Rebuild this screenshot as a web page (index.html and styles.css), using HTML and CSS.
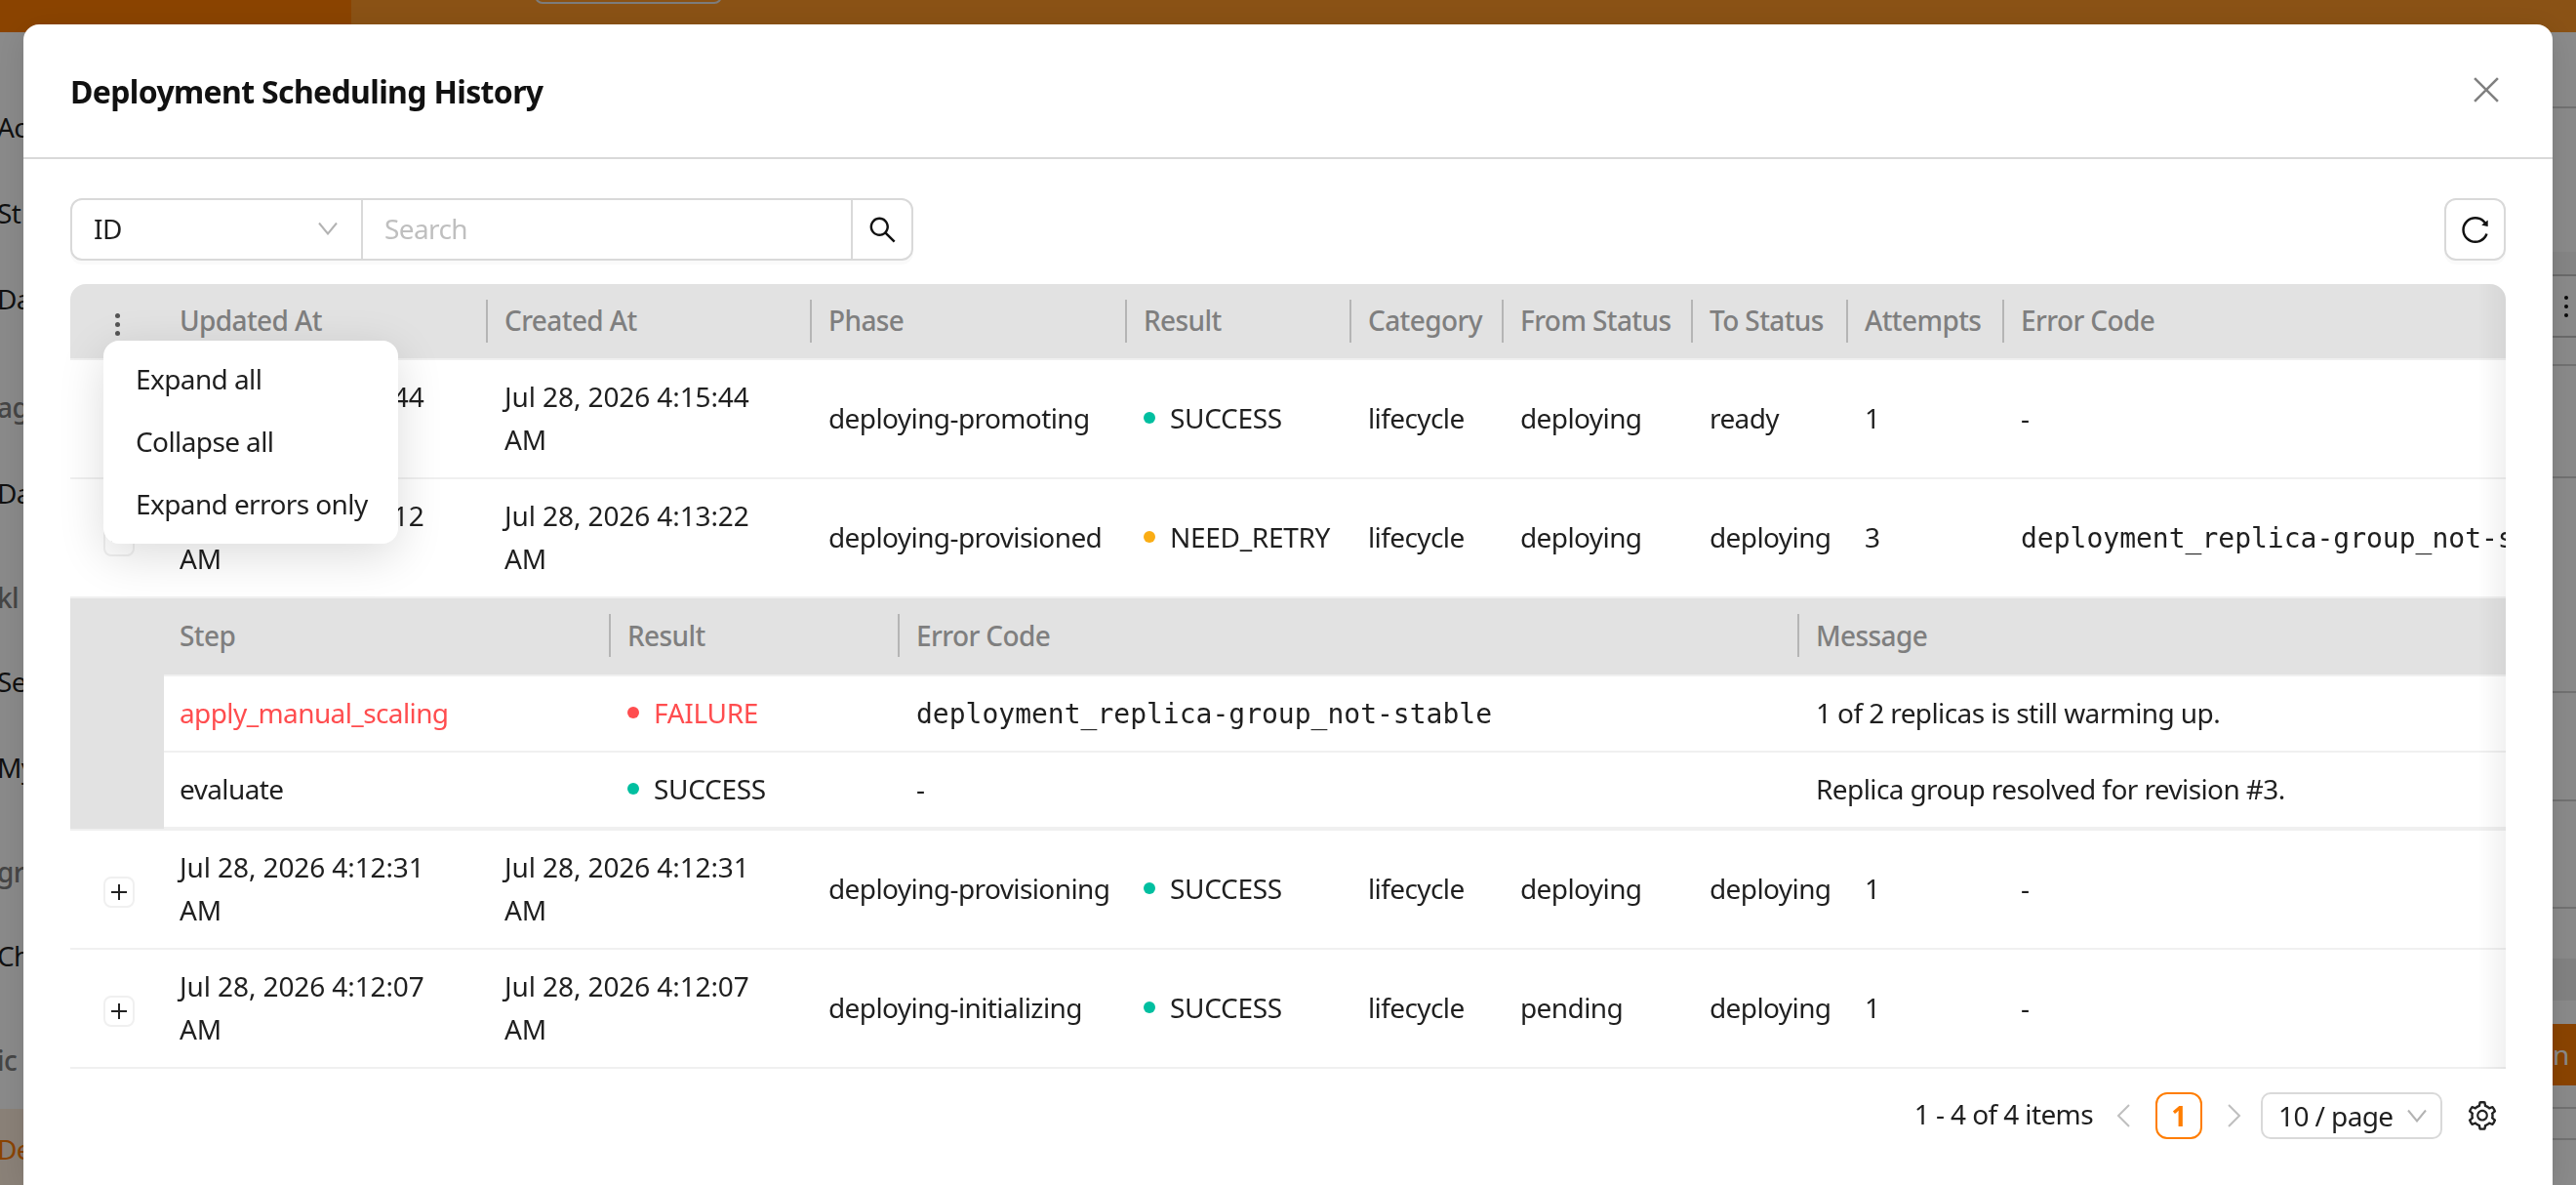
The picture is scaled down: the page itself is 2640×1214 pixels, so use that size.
FILE: index.html
```html
<!DOCTYPE html>
<html lang="en">
<head>
    <meta charset="UTF-8">
    <title>Deployment Scheduling History</title>
    <link rel="stylesheet" href="styles.css">
</head>
<body>
    <div class="app">
        <div class="topbar">
            <div class="brand"></div>
            <div class="topbar-main"><div class="top-btn"></div></div>
        </div>
        <div class="page">
            <div class="sidebar">
                <div class="side-item">Ac</div>
                <div class="side-item">St</div>
                <div class="side-item">Da</div>
                <div class="side-label">ag</div>
                <div class="side-item">Da</div>
                <div class="side-label tight">kl</div>
                <div class="side-item">Se</div>
                <div class="side-item">My</div>
                <div class="side-label tight">gr</div>
                <div class="side-item">Ch</div>
                <div class="side-label tight">ic</div>
                <div class="side-item active">De</div>
            </div>
            <div class="rail">
                <div class="rail-row"></div>
                <div class="rail-row plain"></div>
                <div class="rail-row soft"></div>
                <div class="rail-row dots"><span></span><span></span><span></span></div>
                <div class="rail-row"></div>
                <div class="rail-row"></div>
                <div class="rail-row"></div>
                <div class="rail-row"></div>
                <div class="rail-row"></div>
                <div class="rail-row plain"></div>
                <div class="rail-row dark"></div>
                <div class="rail-row plain"></div>
                <div class="rail-row orange">n</div>
                <div class="rail-row"></div>
                <div class="rail-row"></div>
                <div class="rail-row plain"></div>
            </div>
        </div>
    </div>
    <div class="mask"></div>

    <div class="modal">
        <div class="modal-header">
            <h1>Deployment Scheduling History</h1>
            <svg class="close-icon" viewBox="0 0 24 24"><path d="M1 1l22 22M23 1L1 23"/></svg>
        </div>
        <div class="modal-body">
            <div class="toolbar">
                <div class="search-group">
                    <div class="field-select">
                        <span>ID</span>
                        <svg class="chevron" viewBox="0 0 20 14"><path d="M1 1.5l9 11 9-11"/></svg>
                    </div>
                    <div class="search-input">Search</div>
                    <div class="search-btn">
                        <svg class="icon" viewBox="0 0 1024 1024"><path d="M909.6 854.5L649.9 594.8C690.2 542.7 712 479 712 412c0-80.2-31.3-155.4-87.9-212.1-56.6-56.7-132-87.9-212.1-87.9s-155.5 31.3-212.1 87.9C143.2 256.5 112 331.8 112 412c0 80.1 31.3 155.5 87.9 212.1C256.5 680.8 331.8 712 412 712c67 0 130.6-21.8 182.7-62l259.7 259.6a8.2 8.2 0 0011.6 0l43.6-43.5a8.2 8.2 0 000-11.6zM570.4 570.4C528 612.7 471.8 636 412 636s-116-23.3-158.4-65.6C211.3 528 188 471.8 188 412s23.3-116.1 65.6-158.4C296 211.3 352.2 188 412 188s116.1 23.2 158.4 65.6S636 352.2 636 412s-23.3 116.1-65.6 158.4z"/></svg>
                    </div>
                </div>
                <div class="refresh-btn">
                    <svg class="icon" viewBox="0 0 1024 1024"><path d="M909.1 209.3l-56.4 44.1C775.8 155.1 656.2 92 521.9 92 290 92 102.3 279.5 102 511.5 101.7 743.7 289.8 932 521.9 932c181.3 0 335.8-115 394.6-276.1 1.5-4.2-.7-8.9-4.9-10.3l-56.7-19.5a8 8 0 00-10.1 4.8c-1.8 5-3.8 10-5.9 14.9-17.3 41-42.1 77.8-73.7 109.4A344.77 344.77 0 01655.9 829c-42.3 17.9-87.4 27-133.8 27-46.5 0-91.5-9.1-133.8-27A341.5 341.5 0 01279 755.2a342.16 342.16 0 01-73.7-109.4c-17.9-42.4-27-87.4-27-133.9s9.1-91.5 27-133.9c17.3-41 42.1-77.8 73.7-109.4 31.6-31.6 68.4-56.4 109.3-73.8 42.3-17.9 87.4-27 133.8-27 46.5 0 91.5 9.1 133.8 27a341.5 341.5 0 01109.3 73.8c9.9 9.9 19.2 20.4 27.8 31.4l-60.2 47a8 8 0 003 14.1l175.6 43c5 1.2 9.9-2.6 9.9-7.7l.8-180.9c-.1-6.6-7.8-10.3-13-6.2z"/></svg>
                </div>
            </div>

            <div class="table-area">
                <div class="table-wrap">
                    <table class="history">
                        <colgroup>
                            <col class="c-expand"><col class="c-updated"><col class="c-created"><col class="c-phase"><col class="c-result">
                            <col class="c-category"><col class="c-from"><col class="c-to"><col class="c-attempts"><col class="c-error">
                        </colgroup>
                        <thead>
                            <tr>
                                <th class="expand-cell"><span class="kebab"><i></i><i></i><i></i></span></th>
                                <th>Updated At</th>
                                <th>Created At</th>
                                <th>Phase</th>
                                <th>Result</th>
                                <th>Category</th>
                                <th>From Status</th>
                                <th>To Status</th>
                                <th>Attempts</th>
                                <th class="last">Error Code</th>
                            </tr>
                        </thead>
                        <tbody>
                            <tr>
                                <td class="expand-cell"><span class="expand-btn"><svg viewBox="0 0 16 16"><path d="M0 8h16M8 0v16"/></svg></span></td>
                                <td class="date">Jul 28, 2026 4:15:44<br>AM</td>
                                <td class="date">Jul 28, 2026 4:15:44<br>AM</td>
                                <td>deploying-promoting</td>
                                <td><span class="status"><i class="dot ok"></i>SUCCESS</span></td>
                                <td>lifecycle</td>
                                <td>deploying</td>
                                <td>ready</td>
                                <td>1</td>
                                <td>-</td>
                            </tr>
                            <tr>
                                <td class="expand-cell"><span class="expand-btn"><svg viewBox="0 0 16 16"><path d="M0 8h16"/></svg></span></td>
                                <td class="date">Jul 28, 2026 4:13:12<br>AM</td>
                                <td class="date">Jul 28, 2026 4:13:22<br>AM</td>
                                <td>deploying-provisioned</td>
                                <td><span class="status"><i class="dot warn"></i>NEED_RETRY</span></td>
                                <td>lifecycle</td>
                                <td>deploying</td>
                                <td>deploying</td>
                                <td>3</td>
                                <td class="mono">deployment_replica-group_not-stable</td>
                            </tr>
                            <tr class="detail-row">
                                <td class="detail-gutter"></td>
                                <td colspan="9" class="detail-cell">
                                    <table class="steps">
                                        <colgroup><col class="s-step"><col class="s-result"><col class="s-error"><col class="s-message"></colgroup>
                                        <thead>
                                            <tr><th>Step</th><th>Result</th><th>Error Code</th><th class="last">Message</th></tr>
                                        </thead>
                                        <tbody>
                                            <tr>
                                                <td class="failed">apply_manual_scaling</td>
                                                <td class="failed"><span class="status"><i class="dot bad"></i>FAILURE</span></td>
                                                <td class="mono">deployment_replica-group_not-stable</td>
                                                <td>1 of 2 replicas is still warming up.</td>
                                            </tr>
                                            <tr>
                                                <td>evaluate</td>
                                                <td><span class="status"><i class="dot ok"></i>SUCCESS</span></td>
                                                <td>-</td>
                                                <td>Replica group resolved for revision #3.</td>
                                            </tr>
                                        </tbody>
                                    </table>
                                </td>
                            </tr>
                            <tr>
                                <td class="expand-cell"><span class="expand-btn"><svg viewBox="0 0 16 16"><path d="M0 8h16M8 0v16"/></svg></span></td>
                                <td class="date">Jul 28, 2026 4:12:31<br>AM</td>
                                <td class="date">Jul 28, 2026 4:12:31<br>AM</td>
                                <td>deploying-provisioning</td>
                                <td><span class="status"><i class="dot ok"></i>SUCCESS</span></td>
                                <td>lifecycle</td>
                                <td>deploying</td>
                                <td>deploying</td>
                                <td>1</td>
                                <td>-</td>
                            </tr>
                            <tr>
                                <td class="expand-cell"><span class="expand-btn"><svg viewBox="0 0 16 16"><path d="M0 8h16M8 0v16"/></svg></span></td>
                                <td class="date">Jul 28, 2026 4:12:07<br>AM</td>
                                <td class="date">Jul 28, 2026 4:12:07<br>AM</td>
                                <td>deploying-initializing</td>
                                <td><span class="status"><i class="dot ok"></i>SUCCESS</span></td>
                                <td>lifecycle</td>
                                <td>pending</td>
                                <td>deploying</td>
                                <td>1</td>
                                <td>-</td>
                            </tr>
                        </tbody>
                    </table>
                </div>
                <div class="expand-menu">
                    <div class="menu-item">Expand all</div>
                    <div class="menu-item">Collapse all</div>
                    <div class="menu-item">Expand errors only</div>
                </div>
            </div>

            <div class="pagination">
                <span class="total">1 - 4 of 4 items</span>
                <svg class="page-arrow" viewBox="0 0 14 24"><path d="M13 1L2 12l11 11"/></svg>
                <span class="page-num">1</span>
                <svg class="page-arrow" viewBox="0 0 14 24"><path d="M1 1l11 11L1 23"/></svg>
                <div class="page-size">
                    <span>10 / page</span>
                    <svg class="chevron" viewBox="0 0 20 14"><path d="M1 1.5l9 11 9-11"/></svg>
                </div>
                <svg class="gear" viewBox="0 0 1024 1024"><path d="M924.8 625.7l-65.5-56c3.1-19 4.7-38.4 4.7-57.8s-1.6-38.8-4.7-57.8l65.5-56a32.03 32.03 0 009.3-35.2l-.9-2.6a443.74 443.74 0 00-79.7-137.9l-1.8-2.1a32.12 32.12 0 00-35.1-9.5l-81.3 28.9c-30-24.6-63.5-44-99.7-57.6l-15.7-85a32.05 32.05 0 00-25.8-25.7l-2.7-.5c-52.1-9.4-106.9-9.4-159 0l-2.7.5a32.05 32.05 0 00-25.8 25.7l-15.8 85.4a351.86 351.86 0 00-99 57.4l-81.9-29.1a32 32 0 00-35.1 9.5l-1.8 2.1a446.02 446.02 0 00-79.7 137.9l-.9 2.6c-4.5 12.5-.8 26.5 9.3 35.2l66.3 56.6c-3.1 18.8-4.6 38-4.6 57.1 0 19.2 1.5 38.4 4.6 57.1L99 625.5a32.03 32.03 0 00-9.3 35.2l.9 2.6c18.1 50.4 44.9 96.9 79.7 137.9l1.8 2.1a32.12 32.12 0 0035.1 9.5l81.9-29.1c29.8 24.5 63.1 43.9 99 57.4l15.8 85.4a32.05 32.05 0 0025.8 25.7l2.7.5a449.4 449.4 0 00159 0l2.7-.5a32.05 32.05 0 0025.8-25.7l15.7-85a350 350 0 0099.7-57.6l81.3 28.9a32 32 0 0035.1-9.5l1.8-2.1c34.8-41.1 61.6-87.5 79.7-137.9l.9-2.6c4.5-12.3.8-26.3-9.3-35zM788.3 465.9c2.5 15.1 3.8 30.6 3.8 46.1s-1.3 31-3.8 46.1l-6.6 40.1 74.7 63.9a370.03 370.03 0 01-42.6 73.6L721 702.8l-31.4 25.8c-23.9 19.6-50.5 35-79.3 45.8l-38.1 14.3-17.9 97a377.5 377.5 0 01-85 0l-17.9-97.2-37.8-14.5c-28.5-10.8-55-26.2-78.7-45.7l-31.4-25.9-93.4 33.2c-17-22.9-31.2-47.6-42.6-73.6l75.5-64.5-6.5-40c-2.4-14.9-3.7-30.3-3.7-45.5 0-15.3 1.2-30.6 3.7-45.5l6.5-40-75.5-64.5c11.3-26.1 25.6-50.7 42.6-73.6l93.4 33.2 31.4-25.9c23.7-19.5 50.2-34.9 78.7-45.7l37.9-14.3 17.9-97.2c28.1-3.2 56.8-3.2 85 0l17.9 97 38.1 14.3c28.7 10.8 55.4 26.2 79.3 45.8l31.4 25.8 92.8-32.9c17 22.9 31.2 47.6 42.6 73.6L781.8 426l6.5 39.9zM512 326c-97.2 0-176 78.8-176 176s78.8 176 176 176 176-78.8 176-176-78.8-176-176-176zm79.2 255.2A111.6 111.6 0 01512 614c-29.9 0-58-11.7-79.2-32.8A111.6 111.6 0 01400 502c0-29.9 11.7-58 32.8-79.2C454 401.6 482.1 390 512 390c29.9 0 58 11.6 79.2 32.8A111.6 111.6 0 01624 502c0 29.9-11.7 58-32.8 79.2z"/></svg>
            </div>
        </div>
    </div>
</body>
</html>
```

FILE: styles.css
```css
* {
    box-sizing: border-box;
}

html, body {
    height: 100%;
    margin: 0;
    overflow: hidden;
}

body {
    font-family: "Noto Sans", Arial, sans-serif;
    font-size: 28px;
    letter-spacing: -0.6px;
    color: rgba(0,0,0,0.88);
    background: #fff;
}

/* page behind the dialog */
.app {
    height: 100%;
    display: flex;
    flex-direction: column;
}

.topbar {
    height: 33px;
    display: flex;
    flex-shrink: 0;
    overflow: hidden;
}

.brand {
    width: 360px;
    background: #ff7d00;
}

.topbar-main {
    flex: 1;
    background: #ff9827;
    padding-left: 188px;
}

.top-btn {
    width: 192px;
    height: 44px;
    margin-top: -40px;
    border: 2px solid #e6e6e6;
    border-radius: 8px;
}

.page {
    flex: 1;
    display: flex;
    justify-content: space-between;
    min-height: 0;
}

.sidebar {
    width: 24px;
    padding-top: 53px;
    overflow: hidden;
}

.side-item {
    height: 88px;
    line-height: 88px;
    margin-left: -3px;
    white-space: nowrap;
}

.side-label {
    height: 64px;
    line-height: 64px;
    margin: 35px 0 12px -3px;
    color: #808080;
    font-weight: 500;
    white-space: nowrap;
}

.side-label.tight {
    margin: 31px 0 10px -3px;
}

.side-item.active {
    height: 100px;
    line-height: 82px;
    margin: 18px 0 0;
    background: #ffeedd;
    color: #ff7d00;
    text-indent: -3px;
}

.rail {
    width: 24px;
    display: grid;
    grid-template-rows: 78px 147px 25px 63px 29px 115px 220px 111px 110px 51px 43px 24px 63px 24px 32px 1fr;
    overflow: hidden;
}

.rail-row {
    border-bottom: 2px solid #d2d2d2;
}

.rail-row.plain {
    border-bottom: 0;
}

.rail-row.soft {
    background: #f6f6f6;
    border-bottom: 2px solid #c4c4c4;
}

.rail-row.dark {
    background: #f0f0f0;
    border-bottom: 0;
}

.rail-row.orange {
    background: #ff7d00;
    border-bottom: 0;
    color: #fff;
    line-height: 63px;
}

.rail-row.dots {
    display: flex;
    flex-direction: column;
    align-items: center;
    justify-content: center;
    gap: 5px;
    padding-left: 4px;
    border-bottom: 2px solid #c4c4c4;
}

.dots span {
    width: 4px;
    height: 4px;
    border-radius: 50%;
    background: #111;
}

.mask {
    position: fixed;
    inset: 0;
    background: rgba(0,0,0,0.46);
}

/* dialog */
.modal {
    position: fixed;
    left: 24px;
    top: 25px;
    right: 24px;
    bottom: 0;
    background: #fff;
    border-radius: 16px 16px 0 0;
    box-shadow: 0 6px 32px rgba(0,0,0,0.12);
}

.modal-header {
    height: 138px;
    display: flex;
    align-items: center;
    justify-content: space-between;
    padding: 0 55px 0 48px;
    border-bottom: 2px solid #d9d9d9;
}

.modal-header h1 {
    margin: 0;
    font-size: 32px;
    font-weight: 700;
    letter-spacing: -0.65px;
    color: #111;
}

.close-icon {
    width: 26px;
    height: 26px;
    margin-bottom: 2px;
}

.close-icon path {
    fill: none;
    stroke: #808080;
    stroke-width: 2.4;
}

.modal-body {
    padding: 40px 48px 0;
}

.toolbar {
    display: flex;
    justify-content: space-between;
    height: 64px;
    margin-bottom: 24px;
}

.search-group {
    display: flex;
    width: 864px;
    border: 2px solid #d9d9d9;
    border-radius: 12px;
    box-shadow: 0 4px 0 rgba(0,0,0,0.02);
}

.field-select {
    width: 298px;
    display: flex;
    align-items: center;
    justify-content: space-between;
    padding: 0 24px 2px 22px;
    border-right: 2px solid #d9d9d9;
}

.chevron {
    width: 20px;
    height: 14px;
}

.chevron path {
    fill: none;
    stroke: #b3b3b3;
    stroke-width: 2;
}

.search-input {
    flex: 1;
    padding-left: 22px;
    line-height: 58px;
    color: #bfbfbf;
}

.search-btn {
    width: 62px;
    display: flex;
    align-items: center;
    justify-content: center;
    border-left: 2px solid #d9d9d9;
}

.refresh-btn {
    width: 63px;
    display: flex;
    align-items: center;
    justify-content: center;
    border: 2px solid #d9d9d9;
    border-radius: 12px;
    box-shadow: 0 4px 0 rgba(0,0,0,0.02);
}

.icon {
    width: 33px;
    height: 33px;
    fill: #111;
}

.table-area {
    position: relative;
}

.table-wrap {
    position: relative;
    overflow: hidden;
    border-radius: 16px 16px 0 0;
}

/* shadow of the scrolled table at its right edge */
.table-wrap::after {
    content: "";
    position: absolute;
    top: 0;
    right: 0;
    bottom: 0;
    width: 28px;
    background: linear-gradient(to right, rgba(0,0,0,0), rgba(0,0,0,0.05));
}

table {
    border-collapse: separate;
    border-spacing: 0;
    table-layout: fixed;
}

.history {
    width: 2683px;
}

.c-expand { width: 96px; }
.c-updated { width: 333px; }
.c-created { width: 332px; }
.c-phase { width: 323px; }
.c-result { width: 230px; }
.c-category { width: 156px; }
.c-from { width: 194px; }
.c-to { width: 159px; }
.c-attempts { width: 160px; }
.c-error { width: 700px; }

.steps {
    width: 2400px;
}

.s-step { width: 459px; }
.s-result { width: 296px; }
.s-error { width: 922px; }
.s-message { width: 723px; }

th, td {
    padding: 15px 16px 17px;
    line-height: 44px;
    text-align: left;
    border-bottom: 2px solid #f0f0f0;
    white-space: nowrap;
}

th {
    position: relative;
    background: #e2e2e2;
    color: #7f7f7f;
    font-weight: 500;
}

th::after {
    content: "";
    position: absolute;
    top: 16px;
    right: 1px;
    width: 2px;
    height: 44px;
    background: #b5b5b5;
}

th.last::after,
th.expand-cell::after {
    display: none;
}

.steps th {
    padding: 16px 16px 18px;
}

.expand-cell {
    padding: 0;
    text-align: center;
}

.date {
    letter-spacing: -0.1px;
}

.kebab {
    display: inline-flex;
    flex-direction: column;
    gap: 4px;
    vertical-align: middle;
}

.kebab i {
    width: 5px;
    height: 5px;
    border-radius: 50%;
    background: #555;
}

.expand-btn {
    display: inline-flex;
    align-items: center;
    justify-content: center;
    width: 32px;
    height: 32px;
    margin: 0 0 2px 3px;
    border: 2px solid #f0f0f0;
    border-radius: 8px;
    vertical-align: middle;
}

.expand-btn svg {
    width: 16px;
    height: 16px;
}

.expand-btn path {
    fill: none;
    stroke: #222;
    stroke-width: 2;
}

td.mono {
    padding: 17px 16px 15px;
    font-family: "DejaVu Sans Mono", monospace;
    letter-spacing: 0;
}

.status {
    display: flex;
    align-items: center;
    gap: 15px;
    letter-spacing: -0.3px;
}

.dot {
    width: 12px;
    height: 12px;
    border-radius: 50%;
}

.dot.ok { background: #00bfa0; }
.dot.warn { background: #faad14; }
.dot.bad { background: #ff4d4f; }

.failed {
    color: #ff4d4f;
}

.detail-gutter {
    background: #e2e2e2;
    padding: 0;
}

.detail-cell {
    padding: 0;
}

/* menu opened from the kebab in the header */
.expand-menu {
    position: absolute;
    left: 34px;
    top: 58px;
    width: 302px;
    padding: 8px 0;
    background: #fff;
    border-radius: 16px;
    box-shadow: 0 12px 48px rgba(0,0,0,0.14);
}

.menu-item {
    height: 64px;
    line-height: 62px;
    padding-left: 33px;
    white-space: nowrap;
}

.pagination {
    display: flex;
    align-items: center;
    justify-content: flex-end;
    height: 48px;
    margin-top: 24px;
    padding-right: 7px;
}

.total {
    margin-right: 24px;
    padding-bottom: 4px;
}

.page-arrow {
    width: 14px;
    height: 24px;
}

.page-arrow path {
    fill: none;
    stroke: #bfbfbf;
    stroke-width: 2;
}

.page-num {
    width: 48px;
    height: 48px;
    margin: 0 26px;
    line-height: 44px;
    text-align: center;
    border: 2px solid #ff7d00;
    border-radius: 12px;
    color: #ff7d00;
    font-weight: 700;
}

.page-size {
    width: 186px;
    height: 48px;
    display: flex;
    align-items: center;
    justify-content: space-between;
    margin-left: 20px;
    padding: 0 14px 0 16px;
    border: 2px solid #d9d9d9;
    border-radius: 10px;
}

.gear {
    width: 34px;
    height: 34px;
    margin-left: 24px;
    fill: #222;
}
```
